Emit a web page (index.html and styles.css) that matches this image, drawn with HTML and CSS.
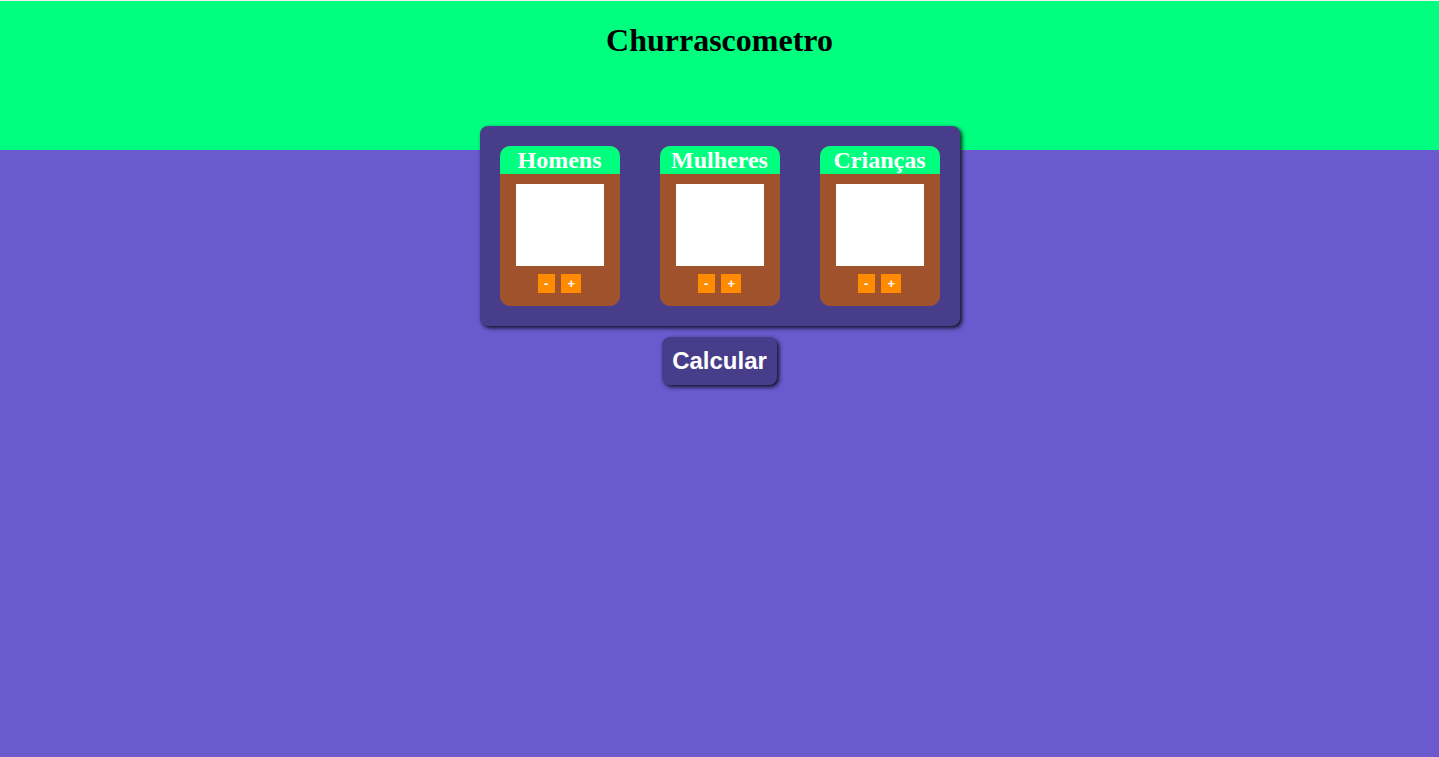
FILE: index.html
```html
<!DOCTYPE html>
<html lang="pt-BR">
<head>
<meta charset="utf-8">
<title>Churrascometro</title>
<link rel="stylesheet" href="styles.css">
</head>
<body>
<header class="topo">
  <h1 class="titulo">Churrascometro</h1>
</header>
<main class="painel">
  <section class="cartao">
    <h2 class="cartao-titulo">Homens</h2>
    <div class="cartao-corpo">
      <div class="foto"></div>
      <div class="controles">
        <button class="btn-qtd">-</button>
        <button class="btn-qtd">+</button>
      </div>
    </div>
  </section>
  <section class="cartao">
    <h2 class="cartao-titulo">Mulheres</h2>
    <div class="cartao-corpo">
      <div class="foto"></div>
      <div class="controles">
        <button class="btn-qtd">-</button>
        <button class="btn-qtd">+</button>
      </div>
    </div>
  </section>
  <section class="cartao">
    <h2 class="cartao-titulo">Crianças</h2>
    <div class="cartao-corpo">
      <div class="foto"></div>
      <div class="controles">
        <button class="btn-qtd">-</button>
        <button class="btn-qtd">+</button>
      </div>
    </div>
  </section>
</main>
<div class="acoes">
  <button class="btn-calcular">Calcular</button>
</div>
</body>
</html>
```

FILE: styles.css
```css
html {
  background: #6a5acd;
}
body {
  margin: 0;
  background: #6a5acd;
  font-family: "Liberation Serif", "Times New Roman", serif;
  min-height: 757px;
}
.topo {
  background: #00ff7f;
  height: 149px;
  border-top: 1px solid #f2f2f2;
  display: flow-root;
  text-align: center;
}
.titulo {
  margin: 21px 0 0;
  font-size: 32px;
  font-weight: bold;
  color: #000;
  line-height: 37px;
}
.painel {
  width: 480px;
  height: 200px;
  box-sizing: border-box;
  margin: -24px auto 0;
  padding: 20px;
  background: #483d8b;
  border-radius: 8px;
  box-shadow: 2px 2px 4px rgba(0, 0, 0, 0.85);
  display: flex;
  gap: 40px;
}
.cartao {
  width: 120px;
  height: 160px;
  border-radius: 10px;
  overflow: hidden;
  background: #a0522d;
  display: flex;
  flex-direction: column;
}
.cartao-titulo {
  margin: 0;
  height: 28px;
  line-height: 28px;
  background: #00ff7f;
  color: #fff;
  font-size: 24px;
  font-weight: bold;
  text-align: center;
}
.cartao-corpo {
  display: flex;
  flex-direction: column;
  align-items: center;
  padding-top: 10px;
}
.foto {
  width: 88px;
  height: 82px;
  background: #fff;
}
.controles {
  display: flex;
  gap: 6px;
  margin-top: 8px;
}
.btn-qtd {
  height: 19px;
  padding: 0 6.5px;
  border: none;
  background: #ff8c00;
  color: #fff;
  font-family: "Liberation Sans", Arial, sans-serif;
  font-size: 13px;
  font-weight: bold;
  line-height: 19px;
}
.acoes {
  display: flex;
  justify-content: center;
  margin-top: 11px;
}
.btn-calcular {
  height: 48px;
  padding: 0 10px;
  border: none;
  border-radius: 8px;
  background: #483d8b;
  color: #fff;
  font-family: "Liberation Sans", Arial, sans-serif;
  font-size: 24px;
  font-weight: bold;
  box-shadow: 2px 2px 4px rgba(0, 0, 0, 0.85);
}
```
